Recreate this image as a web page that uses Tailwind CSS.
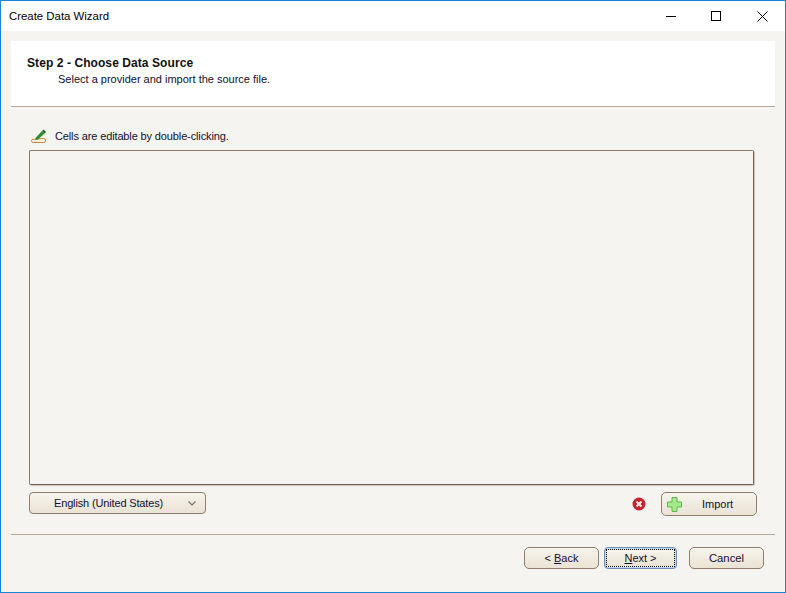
<!DOCTYPE html>
<html lang="en">
<head>
    <meta charset="UTF-8">
    <meta name="viewport" content="width=device-width, initial-scale=1.0">
    <title>Create Data Wizard</title>
    <script src="https://cdn.jsdelivr.net/npm/@tailwindcss/browser@4"></script>
</head>
<body class="bg-[#f6f4f0]">
    <div class="w-[786px] h-[593px] flex flex-col overflow-hidden border border-[#1883d7] font-['Liberation_Sans',sans-serif] text-[11px] leading-[16px] text-[#10102a]">
        <!-- title bar -->
        <div class="h-[30px] bg-white flex items-center shrink-0">
            <span class="ml-[8px] text-black text-[11.4px]">Create Data Wizard</span>
            <div class="ml-auto flex items-center">
                <svg class="mr-[34px]" width="11" height="11" viewBox="0 0 11 11"><path d="M0 5.5H10" stroke="#000" fill="none"/></svg>
                <svg class="mr-[35px]" width="11" height="11" viewBox="0 0 11 11"><rect x="0.5" y="0.5" width="9" height="9" stroke="#000" fill="none"/></svg>
                <svg class="mr-[17px]" width="11" height="11" viewBox="0 0 11 11"><path d="M0.5 0.5L10.5 10.5M10.5 0.5L0.5 10.5" stroke="#000" fill="none"/></svg>
            </div>
        </div>

        <div class="flex-1 flex flex-col px-[10px] pt-[10px]">
            <!-- step header -->
            <div class="h-[66px] shrink-0 bg-white border-b border-[#b5a795] pl-[16px] pt-[14px]">
                <div class="font-bold text-[12px] tracking-[0.08px] leading-[16px] text-[#111]">Step 2 - Choose Data Source</div>
                <div class="ml-[31px] leading-[16px]">Select a provider and import the source file.</div>
            </div>

            <div class="flex flex-col px-[18px]">
                <div class="h-[43px] shrink-0 flex items-center pl-[2px] pt-[15px]">
                    <svg width="16" height="16" viewBox="0 0 16 16">
                        <path d="M1 11.5L12.5 10.5Q14.5 10.5 14.5 12V13Q14.5 14.5 12.5 14.5H2.5Q0.5 14.5 0.5 13V12.5Z" fill="#fdf6e8" stroke="#c9803a"/>
                        <path d="M4.5 10L11 3L13.5 5.5L7 11.5L4.5 12Z" fill="#2f8f2f"/>
                        <path d="M11 3L12.5 1.5L15 4L13.5 5.5Z" fill="#1d6b1d"/>
                    </svg>
                    <span class="ml-[8px] tracking-[-0.13px]">Cells are editable by double-clicking.</span>
                </div>

                <!-- data grid -->
                <div class="h-[335px] shrink-0 w-[725px] rounded-[2px] border border-[#8a7868] border-r-[#6f6154] border-b-[#6f6154] shadow-[1px_1px_1px_#c9c3b8]"></div>

                <div class="mt-[7px] h-[24px] shrink-0 w-[728px] flex items-start">
                    <div class="w-[177px] h-[22px] flex items-center rounded-[4px] border border-[#8f7d6d] bg-gradient-to-b from-[#f7f4ec] to-[#e9e3d5]">
                        <span class="ml-[24px] tracking-[-0.15px]">English (United States)</span>
                        <svg class="ml-auto mr-[9px]" width="8" height="5" viewBox="0 0 8 5"><path d="M0.5 0.5L4 4L7.5 0.5" stroke="#7a6d60" stroke-width="1.2" fill="none"/></svg>
                    </div>
                    <svg class="ml-auto mt-[5px]" width="14" height="14" viewBox="0 0 14 14">
                        <circle cx="7" cy="7" r="6.5" fill="#c8212b"/>
                        <path d="M4.5 4.5L9.5 9.5M9.5 4.5L4.5 9.5" stroke="#fbe3e3" stroke-width="2.2" fill="none"/>
                    </svg>
                    <div class="ml-[15px] w-[96px] h-[24px] flex items-center rounded-[5px] border border-[#8f7d6d] bg-gradient-to-b from-[#f7f4ec] to-[#e9e3d5]">
                        <svg class="ml-[5px]" width="15" height="15" viewBox="0 0 15 15">
                            <path d="M5 0.5H10V5H14.5V10H10V14.5H5V10H0.5V5H5Z" fill="#a6e88c" stroke="#5cb851"/>
                        </svg>
                        <span class="ml-[20px]">Import</span>
                    </div>
                </div>
            </div>

            <!-- footer -->
            <div class="mt-[18px] border-t border-[#b5a795] flex justify-end pt-[12px] pr-[11px]">
                <div class="w-[75px] h-[22px] flex items-center justify-center rounded-[5px] border border-[#8f7d6d] bg-gradient-to-b from-[#f7f4ec] to-[#e9e3d5]">
                    <span>&lt; <span class="underline">B</span>ack</span>
                </div>
                <div class="ml-[5px] w-[73px] h-[22px] p-[1px] rounded-[4px] border border-[#6f8fb5] bg-[#bcd8f5]">
                    <div class="w-full h-full flex items-center justify-center border border-dotted border-black bg-gradient-to-b from-[#f7f4ec] to-[#e9e3d5]">
                        <span><span class="underline">N</span>ext &gt;</span>
                    </div>
                </div>
                <div class="ml-[12px] w-[75px] h-[22px] flex items-center justify-center rounded-[5px] border border-[#8f7d6d] bg-gradient-to-b from-[#f7f4ec] to-[#e9e3d5]">
                    <span class="text-[11.3px]">Cancel</span>
                </div>
            </div>
        </div>
    </div>
</body>
</html>
